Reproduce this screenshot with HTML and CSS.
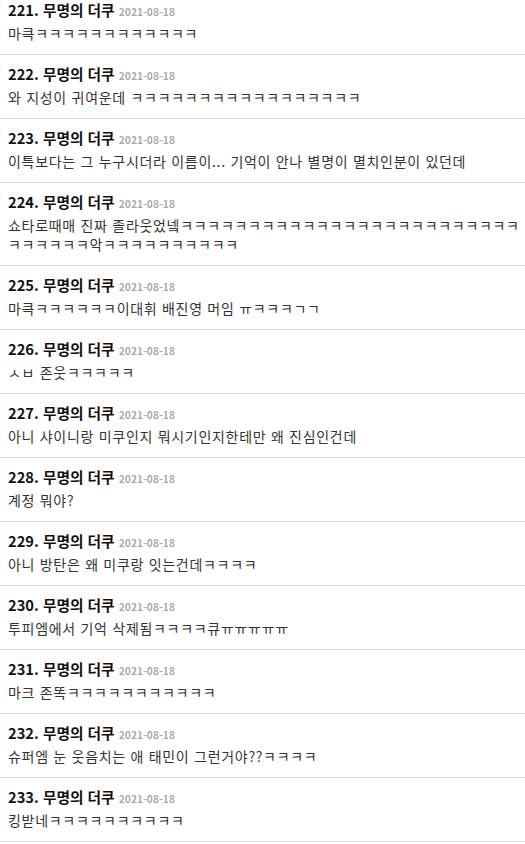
FILE: index.html
```html
<!DOCTYPE html>
<html lang="ko">
<head>
    <meta charset="UTF-8">
    <meta name="viewport" content="width=device-width, initial-scale=1.0">
    <title>댓글</title>
    <link rel="stylesheet" href="styles.css">
</head>
<body>

    <!-- 댓글 목록 -->
    <ul class="comment-list">
        <li class="comment">
            <div class="comment-head"><span class="comment-no">221.</span> <span class="comment-name">무명의 더쿠</span> <span class="comment-date">2021-08-18</span></div>
            <div class="comment-body">마큭ㅋㅋㅋㅋㅋㅋㅋㅋㅋㅋㅋㅋ</div>
        </li>
        <li class="comment">
            <div class="comment-head"><span class="comment-no">222.</span> <span class="comment-name">무명의 더쿠</span> <span class="comment-date">2021-08-18</span></div>
            <div class="comment-body">와 지성이 귀여운데 ㅋㅋㅋㅋㅋㅋㅋㅋㅋㅋㅋㅋㅋㅋㅋㅋㅋ</div>
        </li>
        <li class="comment">
            <div class="comment-head"><span class="comment-no">223.</span> <span class="comment-name">무명의 더쿠</span> <span class="comment-date">2021-08-18</span></div>
            <div class="comment-body">이특보다는 그 누구시더라 이름이... 기억이 안나 별명이 멸치인분이 있던데</div>
        </li>
        <li class="comment">
            <div class="comment-head"><span class="comment-no">224.</span> <span class="comment-name">무명의 더쿠</span> <span class="comment-date">2021-08-18</span></div>
            <div class="comment-body">쇼타로때매 진짜 졸라웃었넼ㅋㅋㅋㅋㅋㅋㅋㅋㅋㅋㅋㅋㅋㅋㅋㅋㅋㅋㅋㅋㅋㅋㅋㅋㅋㅋㅋㅋㅋㅋㅋ악ㅋㅋㅋㅋㅋㅋㅋㅋㅋㅋ</div>
        </li>
        <li class="comment">
            <div class="comment-head"><span class="comment-no">225.</span> <span class="comment-name">무명의 더쿠</span> <span class="comment-date">2021-08-18</span></div>
            <div class="comment-body">마큭ㅋㅋㅋㅋㅋㅋ이대휘 배진영 머임 ㅠㅋㅋㅋㄱㄱ</div>
        </li>
        <li class="comment">
            <div class="comment-head"><span class="comment-no">226.</span> <span class="comment-name">무명의 더쿠</span> <span class="comment-date">2021-08-18</span></div>
            <div class="comment-body">ㅅㅂ 존웃ㅋㅋㅋㅋㅋ</div>
        </li>
        <li class="comment">
            <div class="comment-head"><span class="comment-no">227.</span> <span class="comment-name">무명의 더쿠</span> <span class="comment-date">2021-08-18</span></div>
            <div class="comment-body">아니 샤이니랑 미쿠인지 뭐시기인지한테만 왜 진심인건데</div>
        </li>
        <li class="comment">
            <div class="comment-head"><span class="comment-no">228.</span> <span class="comment-name">무명의 더쿠</span> <span class="comment-date">2021-08-18</span></div>
            <div class="comment-body">계정 뭐야?</div>
        </li>
        <li class="comment">
            <div class="comment-head"><span class="comment-no">229.</span> <span class="comment-name">무명의 더쿠</span> <span class="comment-date">2021-08-18</span></div>
            <div class="comment-body">아니 방탄은 왜 미쿠랑 잇는건데ㅋㅋㅋㅋ</div>
        </li>
        <li class="comment">
            <div class="comment-head"><span class="comment-no">230.</span> <span class="comment-name">무명의 더쿠</span> <span class="comment-date">2021-08-18</span></div>
            <div class="comment-body">투피엠에서 기억 삭제됨ㅋㅋㅋㅋ큐ㅠㅠㅠㅠㅠ</div>
        </li>
        <li class="comment">
            <div class="comment-head"><span class="comment-no">231.</span> <span class="comment-name">무명의 더쿠</span> <span class="comment-date">2021-08-18</span></div>
            <div class="comment-body">마크 존똑ㅋㅋㅋㅋㅋㅋㅋㅋㅋㅋㅋ</div>
        </li>
        <li class="comment">
            <div class="comment-head"><span class="comment-no">232.</span> <span class="comment-name">무명의 더쿠</span> <span class="comment-date">2021-08-18</span></div>
            <div class="comment-body">슈퍼엠 눈 웃음치는 애 태민이 그런거야??ㅋㅋㅋㅋ</div>
        </li>
        <li class="comment">
            <div class="comment-head"><span class="comment-no">233.</span> <span class="comment-name">무명의 더쿠</span> <span class="comment-date">2021-08-18</span></div>
            <div class="comment-body">킹받네ㅋㅋㅋㅋㅋㅋㅋㅋㅋㅋ</div>
        </li>
    </ul>

</body>
</html>
```

FILE: styles.css
```css
body {
    font-family: "Noto Sans CJK KR", "Noto Sans", sans-serif;
    margin: 0;
    padding: 0;
    background-color: #fff;
}
.comment-list {
    list-style: none;
    margin: 0;
    padding: 0;
}
.comment {
    padding: 9px 2px 11px 8px;
    border-bottom: 1px solid #ddd;
}
.comment:first-child {
    padding-top: 0;
}
.comment-head {
    font-size: 14.7px;
    line-height: 20px;
    height: 20px;
    margin-bottom: 4px;
    font-weight: bold;
    color: #111;
}
.comment-date {
    font-size: 10.3px;
    line-height: 1;
    font-weight: bold;
    color: #aaa;
}
.comment-body {
    font-size: 14px;
    line-height: 19px;
    letter-spacing: 0.7px;
    color: #333;
}
```
